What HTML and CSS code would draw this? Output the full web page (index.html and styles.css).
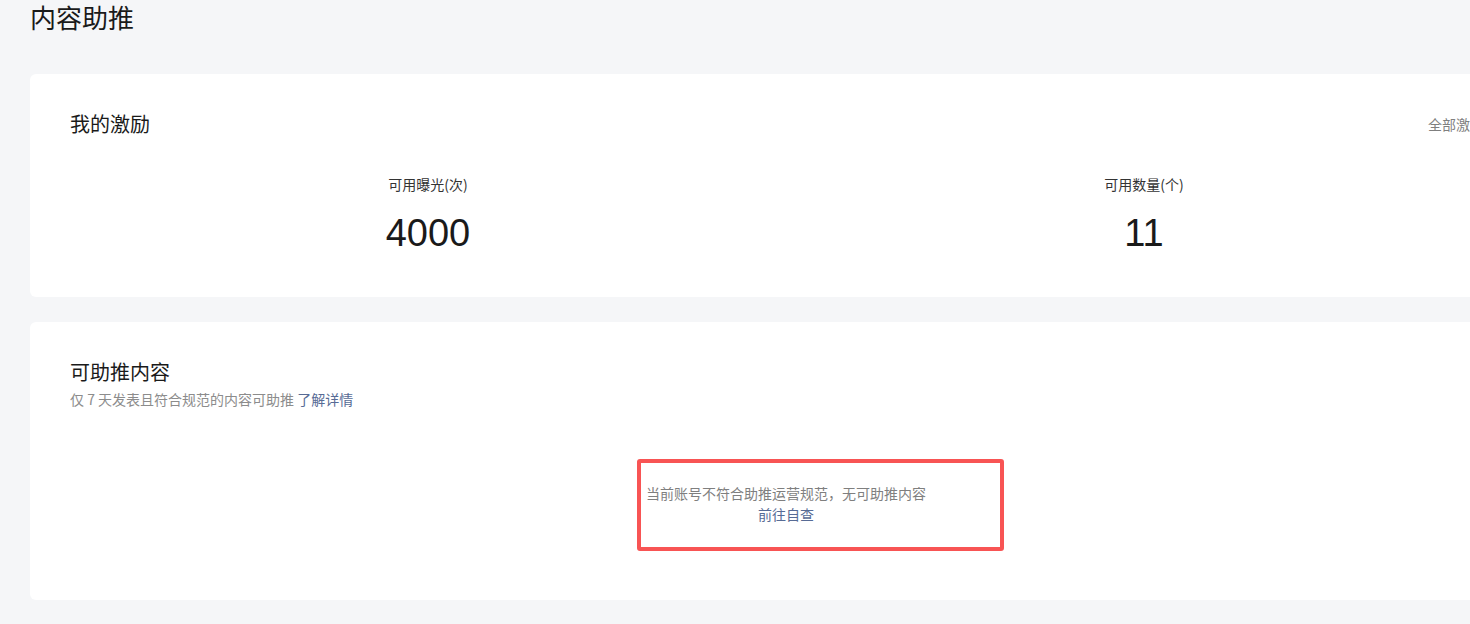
FILE: index.html
```html
<!DOCTYPE html>
<html lang="zh-CN">
<head>
<meta charset="utf-8">
<title>内容助推</title>
<link rel="stylesheet" href="styles.css">
</head>
<body>
<div class="page">
  <h1 class="page-title">内容助推</h1>

  <section class="card card-incentive">
    <div class="card-head">
      <h2 class="card-title">我的激励</h2>
      <a class="head-link">全部激励</a>
    </div>
    <div class="stats">
      <div class="stat">
        <div class="stat-label">可用曝光(次)</div>
        <div class="stat-value">4000</div>
      </div>
      <div class="stat">
        <div class="stat-label">可用数量(个)</div>
        <div class="stat-value">11</div>
      </div>
    </div>
  </section>

  <section class="card card-content">
    <h2 class="card-title">可助推内容</h2>
    <p class="card-desc">仅 7 天发表且符合规范的内容可助推 <a class="link">了解详情</a></p>
    <div class="empty">
      <div class="empty-text">当前账号不符合助推运营规范，无可助推内容</div>
      <a class="link empty-link">前往自查</a>
    </div>
    <div class="mark"></div>
  </section>
</div>
</body>
</html>
```

FILE: styles.css
```css
html, body {
  margin: 0;
  padding: 0;
}
body {
  background: #f5f6f8;
  overflow: hidden;
  font-family: "Noto Sans CJK SC", "Noto Sans", sans-serif;
  color: #1a1a1a;
}
.page {
  width: 1512px;
  padding-left: 30px;
}
.page-title {
  margin: 0;
  font-size: 26px;
  line-height: 34px;
  font-weight: 400;
  color: #1a1a1a;
}
.card {
  background: #fff;
  border-radius: 6px;
  padding: 0 40px;
  box-sizing: border-box;
}
.card-incentive {
  margin-top: 40px;
  padding-top: 38px;
  padding-bottom: 40px;
}
.card-head {
  display: flex;
  justify-content: space-between;
  align-items: center;
}
.card-title {
  margin: 0;
  font-size: 20px;
  line-height: 24px;
  font-weight: 400;
  color: #1a1a1a;
}
.head-link {
  font-size: 14px;
  color: #7f7f7f;
  margin-right: 18px;
}
.stats {
  display: grid;
  grid-template-columns: 1fr 1fr;
  margin-top: 38px;
}
.stat {
  text-align: center;
}
.stat-label {
  font-size: 14px;
  line-height: 20px;
  color: #333;
}
.stat-value {
  margin-top: 15px;
  font-size: 38px;
  line-height: 48px;
  font-family: "Liberation Sans", Arial, sans-serif;
  color: #1a1a1a;
}
.card-content {
  position: relative;
  margin-top: 25px;
  padding-top: 38px;
  padding-bottom: 76px;
}
.card-desc {
  margin: 6px 0 0;
  font-size: 14px;
  line-height: 18px;
  color: #8c8c8c;
}
.link {
  color: #576b95;
}
.empty {
  margin-top: 75px;
  text-align: center;
  font-size: 14px;
  line-height: 20px;
}
.empty-text {
  color: #7f7f7f;
}
.empty-link {
  display: block;
  line-height: 20px;
  margin-top: 1px;
}
.mark {
  position: absolute;
  left: 607px;
  top: 137px;
  width: 367px;
  height: 92px;
  box-sizing: border-box;
  border: 4px solid #f85454;
  border-radius: 3px;
}
```
